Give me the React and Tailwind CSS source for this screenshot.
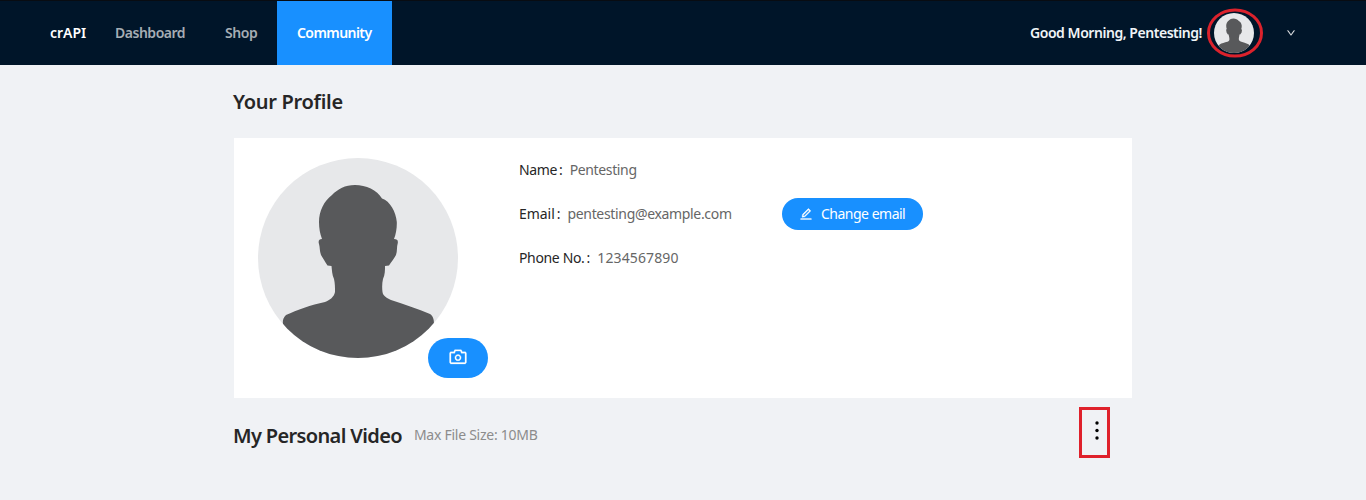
import { AiOutlineCamera, AiOutlineEdit, AiOutlineDown } from "react-icons/ai";

function Silhouette({ className }) {
  return (
    <svg viewBox="0 0 200 200" className={className}>
      <defs>
        <clipPath id="avatar-circle">
          <circle cx="100" cy="100" r="100" />
        </clipPath>
      </defs>
      <circle cx="100" cy="100" r="100" fill="#e7e8ea" />
      <path
        clipPath="url(#avatar-circle)"
        fill="#58595b"
        d="M97 27C87 27 80 31 74 37C66 43 61 53 61 64C61 70 62 76 64 81C61 81 60 83 61 86C62 89 61.500 93 63 97C65 100 67 104 69.500 107.500L73.500 108C74 112 74 117 76 121C77 125 77 130 77 134C76 139 72 142 67 144C53 147 39 152 28 157C25 160 24.500 163 25 166L40 200L160 200L176 166C176 161 175 158 172 156C160 151 146 146 133 142C129 140 125 138 124.500 134C124 130 124 125 125 121C127 117 127 112 127 108L131 107.500C133 104 136 101 138 97C139.500 93 138.500 89 139.800 85C140.200 82 139 81 136 81C138 76 139 70 138.800 64C138 54 132 43 124 40.500C119 32 108 27 97 27Z"
      />
    </svg>
  );
}

function Field({ label, value, labelClass, valueClass }) {
  return (
    <div className="flex h-[22px] items-center whitespace-nowrap text-sm leading-[22px]">
      <span className={labelClass}>{label}</span>
      <span className="ml-[2px] mr-[7px] text-[#262626]">:</span>
      <span className={valueClass}>{value}</span>
    </div>
  );
}

export default function App() {
  return (
    <div className="h-[500px] w-[1366px] overflow-hidden bg-[#f0f2f5] font-['Noto_Sans',sans-serif] text-sm">
      <header className="flex h-[65px] items-stretch border-t border-[#080c12] bg-[#001529] pl-[50px] pr-[70px] font-semibold whitespace-nowrap">
        <div className="flex w-[45px] items-center text-white">crAPI</div>
        <nav className="flex">
          <a className="flex w-[110px] items-center pl-5 tracking-[-0.48px] text-[#a6adb4]">Dashboard</a>
          <a className="flex w-[72px] items-center pl-5 tracking-[-0.4px] text-[#a6adb4]">Shop</a>
          <a className="flex w-[115px] items-center pl-5 tracking-[-0.57px] bg-[#1890ff] text-white">Community</a>
        </nav>
        <div className="ml-auto flex items-center">
          <span className="tracking-[-0.46px] text-[#f0f4f7]">Good Morning, Pentesting!</span>
          <div className="relative ml-[12px] h-10 w-10">
            <Silhouette className="h-10 w-10" />
            <svg className="absolute -left-[7px] -top-[6px] h-[52px] w-[56px]" viewBox="0 0 56 52">
              <ellipse cx="28" cy="26" rx="26.5" ry="23" fill="none" stroke="#db222c" strokeWidth="3" />
            </svg>
          </div>
          <AiOutlineDown className="ml-8 h-[10px] w-[10px] text-white" stroke="currentColor" strokeWidth="25" />
        </div>
      </header>
      <main className="ml-[234px] w-[898px]">
        <h1 className="-ml-px flex h-[73px] items-center pt-px text-xl font-semibold leading-7 tracking-[-0.3px] text-[#262626]">Your Profile</h1>
        <section className="flex h-[260px] bg-white pl-6 pt-5">
          <div className="relative h-[220px] w-[261px] shrink-0">
            <Silhouette className="h-[200px] w-[200px]" />
            <button className="absolute left-[170px] top-[180px] flex h-10 w-[60px] items-center justify-center rounded-full bg-[#1890ff] text-white">
              <AiOutlineCamera className="-mt-[2px] h-5 w-5" stroke="currentColor" strokeWidth="15" />
            </button>
          </div>
          <div className="flex flex-col gap-[22px] pt-[1px]">
            <Field
              label="Name"
              value="Pentesting"
              labelClass="tracking-[-0.4px] text-[#262626]"
              valueClass="tracking-[-0.36px] text-[#666]"
            />
            <div className="flex h-[22px] items-center">
              <div className="w-[263px]">
                <Field
                  label="Email"
                  value="pentesting@example.com"
                  labelClass="tracking-[-0.05px] text-[#262626]"
                  valueClass="tracking-[-0.33px] text-[#666]"
                />
              </div>
              <button className="flex h-8 w-[141px] items-center gap-2 rounded-full bg-[#1890ff] pl-[17px] text-white whitespace-nowrap">
                <AiOutlineEdit className="h-[14px] w-[14px] shrink-0" stroke="currentColor" strokeWidth="25" />
                <span className="tracking-[-0.5px]">Change email</span>
              </button>
            </div>
            <Field
              label="Phone No."
              value="1234567890"
              labelClass="tracking-[-0.35px] text-[#262626]"
              valueClass="tracking-[0.13px] text-[#666]"
            />
          </div>
        </section>
        <div className="flex h-[76px] items-center">
          <h2 className="-ml-px text-xl font-semibold leading-7 tracking-[-0.64px] text-[#262626]">My Personal Video</h2>
          <span className="-mt-[2px] ml-[12px] tracking-[-0.26px] text-[#8c8c8c]">Max File Size: 10MB</span>
          <div className="-mt-[7px] ml-auto mr-[22px] flex h-[51px] w-[31px] items-center justify-center border-[3px] border-[#df212b] pb-[3px] pl-[4px]">
            <svg className="h-5 w-1 shrink-0" viewBox="0 0 4 20">
              <circle cx="2" cy="2" r="1.7" />
              <circle cx="2" cy="9.5" r="1.7" />
              <circle cx="2" cy="17" r="1.7" />
            </svg>
          </div>
        </div>
      </main>
    </div>
  );
}
